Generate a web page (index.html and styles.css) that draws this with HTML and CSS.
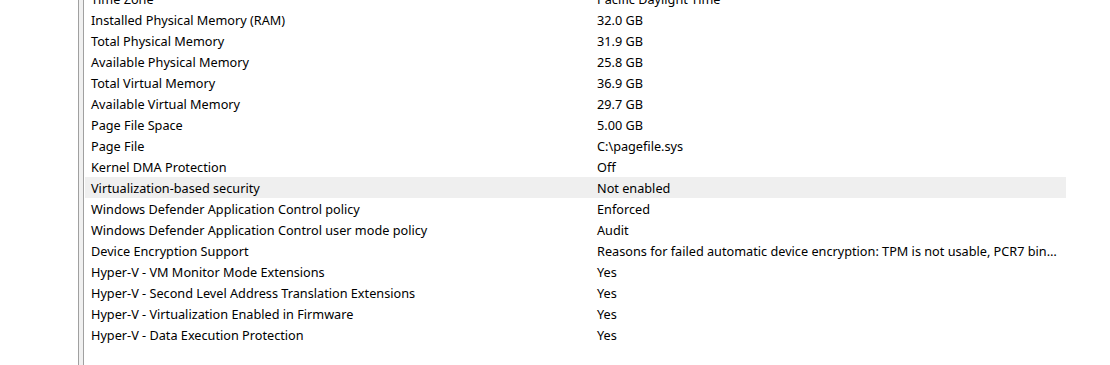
FILE: index.html
```html
<!DOCTYPE html>
<html lang="en">
  <head>
    <meta charset="UTF-8" />
    <title>System Information</title>
    <link rel="stylesheet" href="styles.css">
  </head>
  <body>
    <div class="window">
      <div class="tree-pane"></div>
      <div class="splitter"></div>
      <div class="details">
        <div class="rows">
          <div class="row"><span class="item">Time Zone</span><span class="value">Pacific Daylight Time</span></div>
          <div class="row"><span class="item">Installed Physical Memory (RAM)</span><span class="value">32.0 GB</span></div>
          <div class="row"><span class="item">Total Physical Memory</span><span class="value">31.9 GB</span></div>
          <div class="row"><span class="item">Available Physical Memory</span><span class="value">25.8 GB</span></div>
          <div class="row"><span class="item">Total Virtual Memory</span><span class="value">36.9 GB</span></div>
          <div class="row"><span class="item">Available Virtual Memory</span><span class="value">29.7 GB</span></div>
          <div class="row"><span class="item">Page File Space</span><span class="value">5.00 GB</span></div>
          <div class="row"><span class="item">Page File</span><span class="value">C:\pagefile.sys</span></div>
          <div class="row"><span class="item">Kernel DMA Protection</span><span class="value">Off</span></div>
          <div class="row selected"><span class="item">Virtualization-based security</span><span class="value">Not enabled</span></div>
          <div class="row"><span class="item">Windows Defender Application Control policy</span><span class="value">Enforced</span></div>
          <div class="row"><span class="item">Windows Defender Application Control user mode policy</span><span class="value">Audit</span></div>
          <div class="row"><span class="item">Device Encryption Support</span><span class="value">Reasons for failed automatic device encryption: TPM is not usable, PCR7 binding is not supported, Hardware Security Test Interface failed and device is not Modern Standby</span></div>
          <div class="row"><span class="item">Hyper-V - VM Monitor Mode Extensions</span><span class="value">Yes</span></div>
          <div class="row"><span class="item">Hyper-V - Second Level Address Translation Extensions</span><span class="value">Yes</span></div>
          <div class="row"><span class="item">Hyper-V - Virtualization Enabled in Firmware</span><span class="value">Yes</span></div>
          <div class="row"><span class="item">Hyper-V - Data Execution Protection</span><span class="value">Yes</span></div>
        </div>
      </div>
    </div>
  </body>
</html>
```

FILE: styles.css
```css
html,
body {
  margin: 0;
  padding: 0;
  background-color: #ffffff;
  overflow: hidden;
}

.window {
  display: flex;
  height: 365px;
  font-family: "Noto Sans", "Open Sans", sans-serif;
  font-size: 12.7px;
  color: #000000;
}

.tree-pane {
  width: 78px;
  flex-shrink: 0;
}

/* pane divider: two grey rules with a pale strip between */
.splitter {
  width: 4px;
  flex-shrink: 0;
  background-color: #f0f0f0;
  border-left: 1px solid #a0a0a0;
  border-right: 1px solid #a0a0a0;
}

.details {
  flex: 1;
  padding-left: 1px;
  overflow: hidden;
}

.rows {
  width: 981px;
  margin-top: -12px;
}

.row {
  display: flex;
  height: 21px;
  padding-top: 1px;
  box-sizing: border-box;
  align-items: center;
}

.row.selected {
  background-color: #efefef;
}

.item {
  width: 506px;
  padding-left: 6px;
  box-sizing: border-box;
  flex-shrink: 0;
  white-space: nowrap;
  overflow: hidden;
}

.value {
  flex: 1;
  padding-left: 6px;
  padding-right: 6px;
  white-space: nowrap;
  overflow: hidden;
  text-overflow: ellipsis;
}
```
